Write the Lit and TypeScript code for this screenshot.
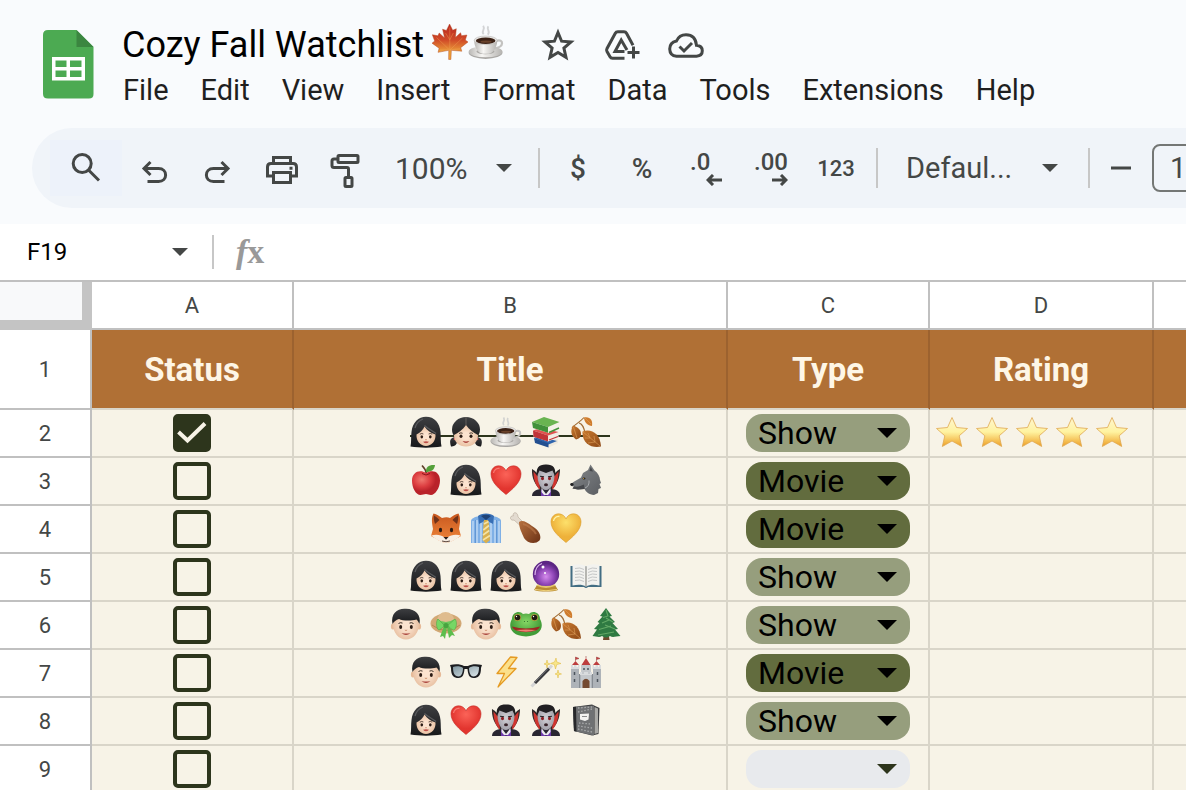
import { LitElement, html, svg, css } from "lit";
import { customElement, state } from "lit/decorators.js";
import { classMap } from "lit/directives/class-map.js";

interface Row {
  done: boolean;
  title: string[];
  type: string;
  rating: number;
}

const woman = svg`
  <path fill="url(#hair)" d="M.5 30.500C1.500 26 .8 21 1.500 16C2.500 6.500 8.500 .8 16 .8C24.500 .8 29.800 7 30.500 16C31 21 30.500 26 31.500 30.500C22 32 10 32 .5 30.500Z"/>
  <path fill="url(#skin)" d="M6.500 18.500C10 17 13 14 14.500 10.500C17 14.500 21 17 25.500 18.500C26 25 21.500 30 16 30C10.500 30 6 25 6.500 18.500Z"/>
  <path fill="none" stroke="#5a5b5e" stroke-width="1.200" d="M14.500 9.500C18 13 23 15 26 17.500M13 3C9 4.500 6 8 5 12"/>
  <path fill="none" stroke="#382a22" stroke-width=".8" d="M9.800 18.200q2-1.300 3.600-.2M18.600 18q2-1.200 3.600.2"/>
  <ellipse cx="11.800" cy="20.800" rx="1.300" ry="1.600" fill="#2b1b14"/><ellipse cx="20.300" cy="20.800" rx="1.300" ry="1.600" fill="#2b1b14"/>
  <path d="M15 23.500q1 .8 2 0" fill="none" stroke="#d39a78" stroke-width=".9"/>
  <path d="M13 25.800q3-1 6 0q-3 3-6 0Z" fill="#bd5049"/>`;

const boy = svg`
  <ellipse cx="2.900" cy="18.500" rx="2" ry="3" fill="#e6ba99"/><ellipse cx="29.100" cy="18.500" rx="2" ry="3" fill="#e6ba99"/>
  <path fill="url(#skin)" d="M3 15C3 7 8 3 16 3S29 7 29 15C29.500 25 23 31.500 16 31.500S2.500 25 3 15Z"/>
  <path fill="url(#hair)" d="M2.500 16C.5 6 7 .5 15 .8C25 .3 31.500 7 29.500 16C28.500 14 28 13 26.500 11.500C20 13.500 12 12.500 9 11C6 12 4 13.500 2.500 16Z"/>
  <path fill="none" stroke="#3a2d24" d="M8.500 15.500q2-1.400 4-.4M19.500 15.100q2-1 4 .4"/>
  <ellipse cx="10.700" cy="19" rx="1.500" ry="1.900" fill="#2b1b14"/><ellipse cx="21.300" cy="19" rx="1.500" ry="1.900" fill="#2b1b14"/>
  <path d="M14.800 22q1.200 1 2.400 0" fill="none" stroke="#cf9370"/>
  <path d="M11.500 25q4.500 1.200 9 0q-4.500 4.200-9 0Z" fill="#a8413a"/>`;

const heartPath = "M16 30.500C10 25.500 1 18.500 1 10C1 5 4.500 1.800 8.500 1.800C12 1.800 14.800 3.800 16 7C17.200 3.800 20 1.800 23.500 1.800C27.500 1.800 31 5 31 10C31 18.500 22 25.500 16 30.500Z";

const emoji: Record<string, ReturnType<typeof svg>> = {
  "maple leaf": svg`
    <path fill="url(#maple)" stroke="#b4461f" stroke-width=".4" d="M15.600 0L18.400 5.500L21.600 4.200L20.800 12L25.400 7.800L26.200 10.400L31 9.800L29.600 14.200L32 16L25.500 21L26.500 24.200L17.200 23.400L16.800 31.500L14.800 31.500L14.900 23.400L5.400 25.200L6.300 21.500L0 17L2.400 15.200L.3 9.500L5.300 10.500L6.400 8L11.200 12.400L9.400 4.600L12.800 5.800Z"/>
    <path stroke="#f3a257" stroke-width=".5" opacity=".7" fill="none" d="M15.800 3V24M16 23L27 12.500M15.500 23L4 12M16 23L25 22M15.500 23L7 23M15.800 14L19 8M15.800 14L12 8"/>`,
  "hot coffee": svg`
    <ellipse cx="15.600" cy="25.600" rx="15" ry="5.400" fill="#a9a7a4"/><ellipse cx="15.600" cy="24.600" rx="15" ry="5" fill="url(#china)"/>
    <ellipse cx="15.500" cy="24.500" rx="8" ry="2.400" fill="#aaa8a5"/>
    <path d="M25 15.200C32 12.500 32.500 21 23.500 21.600" fill="none" stroke="#c3c2c0" stroke-width="2"/>
    <path d="M5.500 14.500H26C26 21 22 26 18.500 26.500H13C9 26 5.500 21 5.500 14.500Z" fill="url(#china)"/>
    <ellipse cx="15.700" cy="14.500" rx="10.200" ry="3.800" fill="#e9e8e6" stroke="#b5b3b0" stroke-width=".5"/>
    <ellipse cx="15.700" cy="14.900" rx="8.700" ry="2.800" fill="#3c2216"/><ellipse cx="16" cy="15.700" rx="5" ry="1" fill="#6a422b"/>
    <path d="M14 9C11 6.500 16 5 13.500 1.500M17.500 9.500C20.500 7 16 5 18 2" fill="none" stroke="#c9cbcc" stroke-width="1.700" opacity=".8"/>`,
  woman,
  girl: svg`
    <path fill="url(#hair)" d="M5 21C-.5 22-.5 26 1 30.500C5 31 8 28 7 23ZM27 21C32.500 22 32.500 26 31 30.500C27 31 24 28 25 23Z"/>
    <circle cx="5" cy="23" r="1.300" fill="#d35a60"/><circle cx="27" cy="23" r="1.300" fill="#d35a60"/>
    <ellipse cx="16" cy="13.500" rx="14" ry="12.500" fill="url(#hair)"/>
    <path fill="url(#skin)" d="M4 19C8 17 13 13.500 16 9C19 13.500 24 17 28 19C28 26 23 30.500 16 30.500S4 26 4 19Z"/>
    <path d="M16 1V9" stroke="#77706b" stroke-width=".7"/>
    <path fill="none" stroke="#3a2d24" stroke-width=".9" d="M9 17.500q2-1.200 3.600-.2M19.400 17.300q2-1 3.600.2"/>
    <ellipse cx="11" cy="20.300" rx="1.500" ry="1.700" fill="#2b1b14"/><ellipse cx="21" cy="20.300" rx="1.500" ry="1.700" fill="#2b1b14"/>
    <path d="M12.500 25q3.500.8 7 0q-3.500 4-7 0Z" fill="#a8413a"/>`,
  books: svg`
    <path d="M5 22L10 19L28 23V27L19 31.500L5 26.500Z" fill="#eee9dd"/><path d="M4 22L8 20L27 25L18.500 28.500Z" fill="#2e64ad"/>
    <path d="M4 22L18.500 27.500V31.500L5 27Z" fill="#234f90"/>
    <path d="M3 15L10 12L28.500 16V21.500L18 25.500L3.500 20.500Z" fill="#f1ede4"/><path d="M3 14.500L10 12L28.500 16L18 19.500Z" fill="#df5351"/>
    <path d="M3 14.500L18 19.500V25.500L3.500 20.800Z" fill="#c13438"/><path d="M19 24L28 20.500" stroke="#c13438" stroke-width="1.300"/>
    <path d="M2.500 6.500L14 2L29 7V12.500L19 17L2.500 12Z" fill="#f4f1e8"/><path d="M2 6L14 1L29.500 6L18 11Z" fill="#69b451"/>
    <path d="M2 6L18 11V16.800L3 12Z" fill="#41913a"/><path d="M19 16.500L29 12" stroke="#41913a" stroke-width="1.400"/>`,
  "fallen leaves": svg`
    <path d="M2 12C5 8 9 7 14 1.500M9 7C13 8 14 12 15 17" fill="none" stroke="#9f6a31" stroke-width="1.100"/>
    <path d="M14 1.500C20 .3 23 4 22 10C18 9.500 14 6.500 14 1.500Z" fill="#cf7c2d"/>
    <path d="M3 9.500C7 11 11 13 11 18C11 21 9 23 6 23.500C1 20 0 15 3 9.500Z" fill="url(#leaf)"/>
    <path d="M12.500 15.500C21 12.500 30 17 31 30.500C22 32.500 12 28 12.500 15.500Z" fill="url(#leaf)"/>
    <path d="M13 16L30 30M18 17L20 22L15 22M24 20L25 26L18 27M3.500 11L7 22M15 2L21 8" fill="none" stroke="#dfa05a" stroke-width=".6"/>`,
  "red apple": svg`
    <path d="M16.500 10C16 6 14.500 4 12 1.500" stroke="#60402a" stroke-width="1.700" fill="none"/>
    <path d="M16 8C15.500 3 19 .5 25 1C24.500 6 21 8 16 8Z" fill="#55a03a"/>
    <path d="M16 9C23 5 30 8 30 16.500C30 24 25 31 21 31C18.500 31 18 30 16 30S12.500 31 10.500 31C6 31 2 24 2 16.500C2 8 10 5 16 9Z" fill="url(#apple)"/>
    <path d="M12 9.500q4 3 8 0" stroke="#8c151b" fill="none"/>`,
  "red heart": svg`<path d="${heartPath}" fill="url(#red)" stroke="#c52b27" stroke-width=".6"/><path d="M3.500 9C4 5.500 7 4 9.500 4.500" stroke="#ff9287" stroke-width="1.300" fill="none" opacity=".7"/>`,
  "yellow heart": svg`<path d="${heartPath}" fill="url(#gold)" stroke="#d99b27" stroke-width=".6"/><path d="M3.500 9C4 5.500 7 4 9.500 4.500" stroke="#fff4a9" stroke-width="1.300" fill="none"/>`,
  vampire: svg`
    <path d="M2 5C6 7 8 10 10 14H22C24 10 26 7 30 5C30 14 27 21 20 28H12C5 21 1.500 14 2 5Z" fill="#302829"/>
    <path d="M3.500 7.500L9 14L10 26C6 22 3.500 16 3.500 7.500ZM28.500 7.500L23 14L22 26C26 22 28.500 16 28.500 7.500Z" fill="#cf3530"/>
    <path d="M2 32C2 27 7 25.500 11 25H21C26 25.500 30 27 30 32Z" fill="#292631"/>
    <path d="M11 25L16 32L21 25V32H11Z" fill="#6e39aa"/><path d="M11.500 24L16 30L20.500 24V28L18 31H14L11.500 28Z" fill="#ece9ef"/>
    <path d="M7.500 9C7.500 4 11 2 16 2S24.500 4 24.500 9C25 19 21 26 16 26S7 19 7.500 9Z" fill="url(#grey)"/>
    <path d="M7 12C5.500 4 9 .3 16 .5C23 .3 26.500 4 25 12L22.500 6.500L16 9L9.500 6.500Z" fill="#211f22"/>
    <ellipse cx="12.500" cy="14.500" rx="1.500" ry="1.700" fill="#8e1f24"/><ellipse cx="19.500" cy="14.500" rx="1.500" ry="1.700" fill="#8e1f24"/>
    <path d="M10 12.300L14 12.800M18 12.800L22 12.300" stroke="#29262a" stroke-width="1.100"/><ellipse cx="16" cy="20.800" rx="2" ry="1.500" fill="#382228"/>`,
  wolf: svg`
    <path d="M1 20C4 17 8 15.500 11 13.500L13 9L18 6L20.500 .5L24.500 6.500C28 9 30 13 30 16L31 19L29.500 20L31 24L28.500 25L28 29L24 31C19 30.500 16 28 14.500 25L8 25.500L2.500 24.500L4 22.500L1 22Z" fill="url(#fur)"/>
    <path d="M19.500 7L20.700 3L23 7.500ZM4 22.500C8 23 11 22 14 20.500L14.500 25L8 25.500L2.500 24.500Z" fill="#46484c"/>
    <path d="M15 24C18 23 19.500 20 19 16.500" fill="none" stroke="#a7aaad"/>
    <ellipse cx="1.900" cy="20.500" rx="1.700" ry="1.400" fill="#202022"/><ellipse cx="14" cy="14.500" rx="1.500" ry="1" fill="#2a241c"/><circle cx="13.600" cy="14.400" r=".5" fill="#e4b64c"/>`,
  fox: svg`
    <path d="M3 17C2 11 1 6 3.500 1.500C7 2 9 4 12 6C15 5 18 5 20 6C23 4 25 2 28.500 1.500C31 6 30 11 29 17L31 24C25 27 20 31 16 31S7 27 1 24Z" fill="url(#fox)"/>
    <path d="M4 3.500C6 5 8 6 9.500 8L5 12C4 9 3.500 6 4 3.500ZM28 3.500C26 5 24 6 22.500 8L27 12C28 9 28.500 6 28 3.500Z" fill="#6e321a"/>
    <path d="M1 23.500C7 22 11 23 14.500 25.500H17.500C21 23 25 22 31 23.500C26 27 21 31 16 31S6 27 1 23.500Z" fill="#f7eee3"/>
    <ellipse cx="10.500" cy="18" rx="1.600" ry="2.300" fill="#291811"/><ellipse cx="21.500" cy="18" rx="1.600" ry="2.300" fill="#291811"/>
    <path d="M13.500 25H18.500L16 27.800Z" fill="#271b19"/><path d="M12 29q4 1.500 8 0" fill="none" stroke="#4b342a" stroke-width=".9"/>`,
  "shirt and necktie": svg`
    <path d="M1 9C1 6.500 5 5 9 4H23C27 5 31 6.500 31 9V31H1Z" fill="#7fb0e6"/>
    <path d="M3 9V31M7 8V31M11 11V31M21 11V31M25 8V31M29 9V31" stroke="#b9d5f3" stroke-width="1.600"/>
    <path d="M5.500 8V31M26.500 8V31" stroke="#5b91cf" stroke-width=".8"/>
    <path d="M8 4C11 .5 21 .5 24 4L23 12L16 8L9 12Z" fill="#386fb5"/><path d="M11 4Q16 1.500 21 4L16 8Z" fill="#1f4377"/>
    <path d="M14 8H18L19 12L20 28L16 31.500L12.500 28L13.500 12Z" fill="#d9b04e"/>
    <path d="M14 12L18.500 9.500M13.300 18L19 13.500M13 23L19.300 18.500M13 28L20 23.500" stroke="#f4e3a6" stroke-width="1.600"/>`,
  "poultry leg": svg`
    <path d="M4 8L14 17L17 14L8 5C8 2 6 0 4 1C3 2 3 3 3.500 3.800C1.500 3.500 0 5 .5 6.500C1 8 2.500 8.500 4 8Z" fill="#e3dbd0" stroke="#b6a798" stroke-width=".6"/>
    <path d="M9 10C12 7.500 17 10 22 14C29 18 32 24 29.500 28.500C25 33 17 31 14 26C12 21 9 16 9 10Z" fill="url(#meat)"/>
    <path d="M13 12C18 13 24 18 26 22" stroke="#c68151" stroke-width="2" opacity=".5" fill="none"/>`,
  "crystal ball": svg`
    <path d="M7 25H25L28 30C23 32 9 32 4 30Z" fill="#b98b32"/><path d="M5 29.500Q16 32 27 29.500" fill="none" stroke="#efd27c"/>
    <circle cx="16" cy="14" r="13.200" fill="url(#orb)"/><path d="M7 25Q16 29 25 25" stroke="#e5c76d" stroke-width="1.800" fill="none"/>
    <circle cx="13" cy="7" r="1.500" fill="#fff"/><circle cx="15" cy="13" r="1" fill="#fff"/><path d="M5 15C5 9 8 5 12 3.500" stroke="#ddb2ee" stroke-width="1.200" fill="none"/>`,
  "open book": svg`
    <path d="M.5 6H31.500V27H18Q16 29 14 27H.5Z" fill="#426d83"/>
    <path d="M2.500 5C8 3.500 13 4 16 6.500C19 4 24 3.500 29.500 5V25.500C24 24 19 24.500 16 26.500C13 24.500 8 24 2.500 25.500Z" fill="#f2f2ef"/>
    <path d="M16 6.500V26.500" stroke="#a6a6a2" stroke-width="1.600"/>
    <path d="M5 8.500q5-1.500 9 1M5 11.500q5-1.500 9 1M5 14.500q5-1.500 9 1M5 17.500q5-1.500 9 1M5 20.500q5-1.500 9 1M27 8.500q-5-1.500-9 1M27 11.500q-5-1.500-9 1M27 14.500q-5-1.500-9 1M27 17.500q-5-1.500-9 1M27 20.500q-5-1.500-9 1" fill="none" stroke="#b9bbbc" stroke-width=".8"/>`,
  boy,
  "sun hat": svg`
    <ellipse cx="16" cy="15.500" rx="15.500" ry="10" fill="#d2a875"/><path d="M2 17Q16 28 30 17" stroke="#b88854" fill="none"/>
    <path d="M7 13C8 1 23 1 24.500 13C19 17 12 17 7 13Z" fill="#dfbc8e"/>
    <path d="M7 11Q16 17 24.500 11L25 15Q16 20 7 15Z" fill="#6cc65c"/>
    <path d="M15 18L8 11C5 14 7 22 9 22ZM17 18L25 11C28 14 26 23 23 22Z" fill="#76d765" stroke="#4aa342" stroke-width=".5"/>
    <path d="M14 18L10 29L13 28L15 31L17 19ZM17 19L19 30L22 27L25 28L19 18Z" fill="#5dbd4e"/><circle cx="16" cy="17.500" r="2.600" fill="#48a440"/>`,
  frog: svg`
    <path d="M2 11C2 4 10 2 13 6Q16 5 19 6C22 2 30 4 30 11C34 18 32 28 16 28.500C0 28-2 18 2 11Z" fill="url(#frog)"/>
    <circle cx="7.500" cy="9.500" r="3.600" fill="#b5a03e"/><circle cx="24.500" cy="9.500" r="3.600" fill="#b5a03e"/>
    <circle cx="7.500" cy="9.500" r="2.800" fill="#1f1b12"/><circle cx="24.500" cy="9.500" r="2.800" fill="#1f1b12"/><circle cx="6.500" cy="8.500" r=".7" fill="#fff"/><circle cx="23.500" cy="8.500" r=".7" fill="#fff"/>
    <path d="M2 18.500Q16 22.500 30 18.500C28 26 4 26 2 18.500Z" fill="#9a2a22"/><path d="M6 22Q16 21 26 22Q16 25.500 6 22Z" fill="#ec8073"/><circle cx="14.500" cy="13.500" r=".6" fill="#2f6d2d"/><circle cx="17.500" cy="13.500" r=".6" fill="#2f6d2d"/>`,
  "evergreen tree": svg`
    <path d="M14 25H18.500L19.500 32H13Z" fill="#71492d"/>
    <path d="M16 0L22 8L19.500 8.500L25 14L22.500 15L28 21L25 21.500L30.500 28C26 28 23 30 20 28Q16 31 12 28C9 30 6 28 2.500 28L7 21.500L4 21L9.500 15L7.500 14L12.500 8.500L10 8Z" fill="#2f7a42"/>
    <path d="M16 2L18 8L13 9.500M19 12L12 15M21 18L9 21.500M24 24L8 27M16 10L23 14M15 17L25 21" fill="none" stroke="#63a966" stroke-width="1.100"/>`,
  glasses: svg`
    <path d="M0 9C5 7.500 11 8 14 10H18C21 8 27 7.500 32 9L31 12C31 20 28 22 23.500 22C19 22 18 18 17.500 13H14.500C14 18 13 22 8.500 22C4 22 1 20 1 12Z" fill="#1c1d20"/>
    <path d="M3 11C6 9.500 11 10 13 12C13 17 11 20.500 8.500 20.500C4.500 20.500 3 17 3 11ZM19 12C21 10 26 9.500 29 11C29 17 27.500 20.500 23.500 20.500C21 20.500 19 17 19 12Z" fill="url(#lens)"/>`,
  "high voltage": svg`<path d="M20.500 1L7 17.500H14.500L8 31L26 12.500H18.500L27 1.500Z" fill="#fbe08b" stroke="#e59b23" stroke-width="1.300" stroke-linejoin="round"/>`,
  "magic wand": svg`
    <path d="M1.500 30.500L22 9.500" stroke="#d5d5d5" stroke-width="3"/><path d="M5 27L19 12.600" stroke="#38383b" stroke-width="3"/><path d="M5 26L18 12.500" stroke="#7f8084" stroke-width=".9"/>
    <path d="M26 2L26.800 6L31 7.500L26.800 8.500L25.500 13L24.300 8.500L20.500 7.500L24.500 6ZM17 4L17.700 7L20 8L17.700 8.700L17 12L16.300 8.700L14 8L16.300 7ZM28 14L28.700 17L31.500 18L28.700 18.700L28 22L27.300 18.700L25 18L27.300 17Z" fill="#f7e58a" stroke="#dfb737" stroke-width=".5"/>`,
  castle: svg`
    <path d="M1 13H9V18H23V13H31V32H1Z" fill="#aeb3b8"/><path d="M11 9H21V32H11Z" fill="#c4c8cc"/><path d="M1 13V9H3V11H4V9H6.500V11H8V9H9.500V13ZM22.500 13V9H24V11H25.500V9H28V11H29V9H31V13ZM10 19V16H12V18H14V16H18V18H20V16H22V19Z" fill="#d9dcde"/>
    <path d="M11.500 9L16 2L20.500 9ZM2 9L5.500 5L9 9ZM23 9L26.500 5L30 9Z" fill="#bd3e3e"/><path d="M5.500 5V1L9 2.500L5.500 3.500M26.500 5V1L30 2.500L26.500 3.500M16 2V0" fill="#d33c3c" stroke="#974040" stroke-width=".6"/>
    <path d="M12.500 32V25Q16 20.500 19.500 25V32Z" fill="#744a30"/><path d="M4.500 16V19M27.500 16V19M4.500 23V26M27.500 23V26M14 12V14M18 12V14" stroke="#4c545b" stroke-width="1.500"/>
    <path d="M9.500 18V32M22.500 18V32" stroke="#868c92"/>`,
  notebook: svg`
    <path d="M3 3L22 .5L29.500 4L28.500 30L22 31.500L4 27Z" fill="#3a3b3d"/><path d="M24.500 3L28 4.500V29L24.500 30Z" fill="#a9a9a6"/>
    <path d="M3 3L24 1.500V31.500L4 27Z" fill="#6f7173"/>
    <path d="M8 4L22 3M8 8L22 5M8 22L22 24M8 25L22 28M9 19L21 20" stroke="#a8aaab" stroke-width="1.300" stroke-dasharray="1.500 1.700"/><path d="M3 3L6 2.700L6.500 27.500L4 27Z" fill="#27282a"/>
    <path d="M10 10L19 9.500L18.500 15.500L15 17L10 15.500Z" fill="#f3f3f1"/><path d="M12 12.500H17" stroke="#8a8b8c"/>`,
  star: svg`<path d="M16 1.500L20.500 11.500L31.500 12.500L23.200 19.800L25.700 30.500L16 25L6.300 30.500L8.800 19.800L.5 12.500L11.500 11.500Z" fill="url(#star)" stroke="#dfa852" stroke-width=".8" stroke-linejoin="round"/>`,
};

const drawEmoji = (name: string) =>
  html`<svg class="emoji" viewBox="0 0 32 32" role="img" aria-label=${name}>${emoji[name]}</svg>`;

const gradients = svg`<defs>
  <linearGradient id="hair" x1="0" y1="0" x2="0" y2="1"><stop offset="0" stop-color="#3d3e41"/><stop offset="1" stop-color="#17181a"/></linearGradient>
  <radialGradient id="skin"><stop offset=".3" stop-color="#fce3cf"/><stop offset="1" stop-color="#e9c2a4"/></radialGradient>
  <linearGradient id="maple" x1="0" y1="0" x2="0" y2="1"><stop offset="0" stop-color="#b9261f"/><stop offset=".45" stop-color="#d04a28"/><stop offset=".8" stop-color="#eda23a"/></linearGradient>
  <linearGradient id="china"><stop offset="0" stop-color="#b9b7b4"/><stop offset=".4" stop-color="#f7f6f4"/><stop offset="1" stop-color="#b5b3b0"/></linearGradient>
  <linearGradient id="leaf" x1="0" y1="0" x2="1" y2="1"><stop offset="0" stop-color="#c8792f"/><stop offset="1" stop-color="#8d4917"/></linearGradient>
  <radialGradient id="apple" cx=".35" cy=".35"><stop offset="0" stop-color="#f07a70"/><stop offset=".6" stop-color="#dc3d40"/><stop offset="1" stop-color="#b9222a"/></radialGradient>
  <radialGradient id="red" cy=".3"><stop offset="0" stop-color="#fb6358"/><stop offset="1" stop-color="#e2352f"/></radialGradient>
  <radialGradient id="gold" cy=".3"><stop offset="0" stop-color="#fde06b"/><stop offset="1" stop-color="#eeb13a"/></radialGradient>
  <radialGradient id="grey"><stop offset="0" stop-color="#d2d1d6"/><stop offset="1" stop-color="#a5a3ac"/></radialGradient>
  <linearGradient id="fur" x1="0" y1="0" x2="1" y2="1"><stop offset="0" stop-color="#85888b"/><stop offset="1" stop-color="#5b5e62"/></linearGradient>
  <linearGradient id="fox" x1="0" y1="0" x2="0" y2="1"><stop offset="0" stop-color="#c8581f"/><stop offset="1" stop-color="#f0863a"/></linearGradient>
  <linearGradient id="meat" x1="0" y1="0" x2="1" y2="1"><stop offset="0" stop-color="#b7713f"/><stop offset="1" stop-color="#6b3115"/></linearGradient>
  <radialGradient id="orb" cx=".5" cy=".6"><stop offset="0" stop-color="#d58bec"/><stop offset=".6" stop-color="#8f46b7"/><stop offset="1" stop-color="#5b2583"/></radialGradient>
  <radialGradient id="frog" cy=".4"><stop offset="0" stop-color="#86d765"/><stop offset="1" stop-color="#429c38"/></radialGradient>
  <linearGradient id="lens" x1="0" y1="0" x2="1" y2="1"><stop offset="0" stop-color="#7f959f"/><stop offset="1" stop-color="#dce6e9"/></linearGradient>
  <linearGradient id="star" x1="0" y1="0" x2="0" y2="1"><stop offset="0" stop-color="#fff6cf"/><stop offset=".5" stop-color="#fff3a0"/><stop offset="1" stop-color="#ee9f25"/></linearGradient>
</defs>`;

const icon = (body: unknown) =>
  html`<svg class="icon" viewBox="0 0 40 40" aria-hidden="true">${body}</svg>`;

const icons = {
  star: icon(svg`<path d="M20 7.500L23.600 16.200L33 17L25.900 23.100L28 32.300L20 27.400L12 32.300L14.100 23.100L7 17L16.400 16.200Z"/>`),
  drive: icon(svg`<path d="M22.500 33.300H10.500Q8.800 33.300 8 31.800L5 26.500Q4.200 25 5 23.500L13.300 8.200Q14.100 6.700 15.800 6.700H22Q23.700 6.700 24.500 8.200L31 20.200M22.500 26.500H13L19.200 15L25 25M31.500 21.500V33.500M25.500 27.500H37.500"/>`),
  cloud: icon(svg`<path d="M10.500 31.200H30.500Q36.300 31 36.300 25.800Q36.300 20.800 30.500 20.300Q29.500 9.700 20 9.700Q13.200 9.700 10.500 16Q3.700 17.500 3.700 24Q3.900 30.800 10.500 31.200ZM13.500 21.500L18 26L26 18"/>`),
  search: icon(svg`<circle cx="16.200" cy="15.500" r="9"/><path d="M22.500 22L33 32.500"/>`),
  undo: icon(svg`<path d="M16.500 14L10 20.500L16.500 27M10 20.500H24.500C34 20.500 34 33.500 24.500 33.500H13.500"/>`),
  redo: icon(svg`<path d="M23.500 14L30 20.500L23.500 27M30 20.500H15.500C6 20.500 6 33.500 15.500 33.500H26.500"/>`),
  print: icon(svg`<path d="M11.500 15V9.500H28.500V15M11.500 28H5.500V19Q5.500 15.500 9 15.500H31Q34.500 15.500 34.500 19V28H28.500M11.500 24.500H28.500V34.500H11.500Z"/><path d="M27.500 20.300H30.500" />`),
  paint: icon(svg`<rect x="12" y="7.500" width="20" height="7" rx="1"/><path d="M12 11H8Q6 11 6 13V17.500Q6 19.500 8 19.500H21Q22.500 19.500 22.500 21V29"/><rect x="19" y="29.500" width="7" height="9" rx="1"/>`),
};

const caret = html`<svg class="caret" viewBox="0 0 20 10" aria-hidden="true"><path d="M0 0H20L10 10Z" /></svg>`;

@customElement("app-root")
export class AppRoot extends LitElement {
  @state() private rows: Row[] = [
    { done: true, title: ["woman", "girl", "hot coffee", "books", "fallen leaves"], type: "Show", rating: 5 },
    { done: false, title: ["red apple", "woman", "red heart", "vampire", "wolf"], type: "Movie", rating: 0 },
    { done: false, title: ["fox", "shirt and necktie", "poultry leg", "yellow heart"], type: "Movie", rating: 0 },
    { done: false, title: ["woman", "woman", "woman", "crystal ball", "open book"], type: "Show", rating: 0 },
    { done: false, title: ["boy", "sun hat", "boy", "frog", "fallen leaves", "evergreen tree"], type: "Show", rating: 0 },
    { done: false, title: ["boy", "glasses", "high voltage", "magic wand", "castle"], type: "Movie", rating: 0 },
    { done: false, title: ["woman", "red heart", "vampire", "vampire", "notebook"], type: "Show", rating: 0 },
    { done: false, title: [], type: "", rating: 0 },
  ];

  static styles = css`
    :host {
      display: block;
      height: 100vh;
      overflow: hidden;
      background: #fff;
      color: #444746;
      font-family: Roboto, "Open Sans", sans-serif;
    }
    * { box-sizing: border-box; }
    button, input, select {
      font: inherit;
      color: inherit;
      background: none;
      border: 0;
      margin: 0;
      padding: 0;
      appearance: none;
    }
    svg { display: block; flex: none; }
    .top { background: #f9fbfd; padding: 20px 0 16px; overflow: hidden; }
    .brand { display: flex; gap: 28px; padding-left: 43px; }
    .logo { width: 51px; height: 69px; margin-top: 10px; }
    .title-row { display: flex; align-items: center; height: 50px; }
    h1 {
      display: flex;
      align-items: flex-start;
      margin: 0 22px 0 0;
      font-size: 36px;
      line-height: 42px;
      font-weight: 400;
      color: #000;
      white-space: nowrap;
    }
    h1 .emoji { width: 36px; height: 36px; }
    .title-text { padding-right: 8px; }
    .icon {
      width: 40px;
      height: 40px;
      fill: none;
      stroke: #444746;
      stroke-width: 3;
    }
    .tool {
      display: grid;
      place-items: center;
      flex: none;
      width: 64px;
      height: 56px;
      font-size: 28px;
      font-weight: 500;
    }
    .tool.search { width: 72px; background: #edf2fa; }
    .tool.format { width: 68px; font-size: 22px; }
    .tool.minus { width: 62px; }
    .menu { display: flex; gap: 32px; height: 40px; align-items: center; padding-left: 1px; }
    .menu button { font-size: 29px; line-height: 40px; color: #1f1f1f; }
    .toolbar {
      display: flex;
      align-items: center;
      height: 80px;
      margin: 18px 0 0 32px;
      padding-left: 18px;
      background: #f0f4f9;
      border-radius: 40px 0 0 40px;
      overflow: hidden;
    }
    .rule { flex: none; width: 2px; height: 40px; background: #c7c7c7; }
    .rule.after { margin-right: 6px; }
    .rule.before { margin-left: 6px; }
    .pick { display: grid; align-items: center; flex: none; }
    .pick > * { grid-area: 1 / 1; }
    .pick .caret { justify-self: end; pointer-events: none; }
    .caret { width: 16px; height: 8px; fill: #444746; }
    .zoom { width: 160px; padding-right: 26px; }
    .zoom select { padding-left: 17px; font-size: 30px; }
    .font { width: 210px; padding-right: 30px; }
    .font select { padding-left: 28px; font-size: 29px; }
    .decimals {
      display: grid;
      flex: none;
      width: 64px;
      padding: 0 16px;
      text-align: left;
      font-size: 24px;
      line-height: 24px;
      font-weight: 500;
    }
    .decimals svg {
      justify-self: end;
      width: 16px;
      height: 12px;
      fill: none;
      stroke: #444746;
      stroke-width: 3;
    }
    .size {
      flex: none;
      width: 80px;
      height: 48px;
      padding-left: 16px;
      border: 2px solid #747775;
      border-radius: 8px;
      font-size: 29px;
    }
    .formula {
      display: flex;
      align-items: center;
      height: 58px;
      border-bottom: 2px solid #c0c0c0;
    }
    .cell-name { width: 212px; padding-right: 24px; }
    .cell-name input { width: 140px; padding-left: 27px; font-size: 24px; color: #000; }
    .formula .rule { height: 34px; }
    .fx {
      padding-left: 22px;
      font-family: "Liberation Serif", serif;
      font-size: 34px;
      line-height: 40px;
      color: #999;
      font-weight: 700;
    }
    .entry { flex: 1; min-width: 0; margin-left: 12px; height: 40px; }
    table { width: 100%; border-collapse: separate; border-spacing: 0; table-layout: fixed; }
    .w-head { width: 92px; }
    .w-a, .w-c { width: 202px; }
    .w-b { width: 434px; }
    .w-d { width: 224px; }
    th, td {
      height: 48px;
      padding: 0;
      border: solid #c0c0c0;
      border-width: 0 2px 2px 0;
      font-weight: 400;
      vertical-align: middle;
    }
    th { font-size: 22px; }
    .corner { background: #f8f9fa; border-width: 0 10px 10px 0; border-color: #c4c4c4; }
    td { background: #f7f3e7; border-color: #d9d5c9; }
    .heading td {
      height: 80px;
      background: #b07035;
      border-right-color: #9c622f;
      color: #fef6e6;
      font-size: 33px;
      font-weight: 700;
      text-align: center;
    }
    tr > :last-child { border-right-width: 0; }
    .tick { display: grid; width: 38px; margin: 0 auto; }
    .tick > * { grid-area: 1 / 1; }
    .tick input { width: 38px; height: 38px; border: 4px solid #2d351c; border-radius: 5px; }
    .tick input:checked { background: #2d351c; }
    .tick svg { width: 38px; height: 38px; fill: none; stroke: #f7f3e7; stroke-width: 4; pointer-events: none; }
    .emojis { display: flex; gap: 8px; width: max-content; padding: 0 8px 2px 0; margin: 0 auto; }
    .emojis.struck { background: linear-gradient(#2d351c, #2d351c) 0 19px / 100% 2px no-repeat; }
    .emojis.left { margin: 0 0 0 6px; }
    .emoji { width: 32px; height: 32px; }
    .chip {
      margin: 0 18px;
      padding-right: 13px;
      height: 38px;
      border-radius: 16px;
      background: #e8eaed;
      color: #000;
    }
    .chip.show { background: #969e7d; }
    .chip.movie { background: #626c3e; }
    .chip select { width: 100%; padding-left: 12px; font-size: 32px; line-height: 38px; }
    .chip .caret { width: 20px; height: 10px; fill: #2d351c; }
    .chip.show .caret, .chip.movie .caret { fill: #000; }
  `;

  private toggle(index: number) {
    this.rows = this.rows.map((r, i) => (i === index ? { ...r, done: !r.done } : r));
  }

  private setType(index: number, e: Event) {
    const type = (e.target as HTMLSelectElement).value;
    this.rows = this.rows.map((r, i) => (i === index ? { ...r, type } : r));
  }

  private renderRow(row: Row, i: number) {
    const n = i + 2;
    return html`<tr>
      <th scope="row">${n}</th>
      <td>
        <label class="tick">
          <input type="checkbox" aria-label="Status, row ${n}" .checked=${row.done} @change=${() => this.toggle(i)} />
          ${row.done ? html`<svg viewBox="0 0 38 38" aria-hidden="true"><path d="M5.500 18L14.500 26.500L32 9.500" /></svg>` : ""}
        </label>
      </td>
      <td><div class=${classMap({ emojis: true, struck: row.done })}>${row.title.map(drawEmoji)}</div></td>
      <td>
        <div class=${classMap({ pick: true, chip: true, show: row.type === "Show", movie: row.type === "Movie" })}>
          <select aria-label="Type, row ${n}" @change=${(e: Event) => this.setType(i, e)}>
            <option value="" ?selected=${row.type === ""}></option>
            <option ?selected=${row.type === "Show"}>Show</option>
            <option ?selected=${row.type === "Movie"}>Movie</option>
          </select>
          ${caret}
        </div>
      </td>
      <td><div class="emojis left">${Array.from({ length: row.rating }, () => drawEmoji("star"))}</div></td>
      <td></td>
    </tr>`;
  }

  render() {
    return html`
      <header class="top">
        <div class="brand">
          <svg class="logo" viewBox="0 0 51 69" role="img" aria-label="Sheets">
            ${gradients}
            <path fill="#4caa52" d="M5 0H33.500L50.500 17V64Q50.500 68.500 46 68.500H5Q0 68.500 0 64V5Q0 0 5 0Z" />
            <path fill="#3b8640" d="M33.500 0L50.500 17H33.500Z" />
            <path fill="#fff" fill-rule="evenodd" d="M9 27H42V50.500H9ZM12.500 30.500V37H23.500V30.500ZM27 30.500V37H38.500V30.500ZM12.500 40.500V47H23.500V40.500ZM27 40.500V47H38.500V40.500Z" />
          </svg>
          <div>
            <div class="title-row">
              <h1><span class="title-text">Cozy Fall Watchlist</span>${drawEmoji("maple leaf")}${drawEmoji("hot coffee")}</h1>
              <button class="tool" aria-label="Star">${icons.star}</button>
              <button class="tool" aria-label="Add to Drive">${icons.drive}</button>
              <button class="tool" aria-label="Saved to Drive">${icons.cloud}</button>
            </div>
            <nav class="menu">
              ${["File", "Edit", "View", "Insert", "Format", "Data", "Tools", "Extensions", "Help"].map(
                (m) => html`<button>${m}</button>`
              )}
            </nav>
          </div>
        </div>
        <div class="toolbar" role="toolbar" aria-label="Main">
          <button class="tool search" aria-label="Search the menus">${icons.search}</button>
          <button class="tool" aria-label="Undo">${icons.undo}</button>
          <button class="tool" aria-label="Redo">${icons.redo}</button>
          <button class="tool" aria-label="Print">${icons.print}</button>
          <button class="tool" aria-label="Paint format">${icons.paint}</button>
          <div class="pick zoom">
            <select aria-label="Zoom"><option>100%</option></select>
            ${caret}
          </div>
          <span class="rule after"></span>
          <button class="tool" aria-label="Currency">$</button>
          <button class="tool" aria-label="Percent">%</button>
          <button class="decimals" aria-label="Decrease decimal places">
            .0<svg viewBox="0 0 16 12"><path d="M16 6H2M7 1L2 6L7 11" /></svg>
          </button>
          <button class="decimals" aria-label="Increase decimal places">
            .00<svg viewBox="0 0 16 12"><path d="M0 6H14M9 1L14 6L9 11" /></svg>
          </button>
          <button class="tool format" aria-label="More formats">123</button>
          <span class="rule before"></span>
          <div class="pick font">
            <select aria-label="Font"><option>Defaul...</option></select>
            ${caret}
          </div>
          <span class="rule"></span>
          <button class="tool minus" aria-label="Decrease font size">${icon(svg`<path d="M10 20H30" />`)}</button>
          <input class="size" aria-label="Font size" value="10" />
        </div>
      </header>
      <div class="formula">
        <div class="pick cell-name">
          <input aria-label="Name box" value="F19" />
          ${caret}
        </div>
        <span class="rule"></span>
        <label class="fx" for="entry"><em>f</em>x</label>
        <input class="entry" id="entry" />
      </div>
      <table>
        <colgroup>
          <col class="w-head" /><col class="w-a" /><col class="w-b" /><col class="w-c" /><col class="w-d" /><col />
        </colgroup>
        <thead>
          <tr>
            <th class="corner"></th>
            <th scope="col">A</th>
            <th scope="col">B</th>
            <th scope="col">C</th>
            <th scope="col">D</th>
            <th scope="col"></th>
          </tr>
        </thead>
        <tbody>
          <tr class="heading">
            <th scope="row">1</th>
            <td>Status</td>
            <td>Title</td>
            <td>Type</td>
            <td>Rating</td>
            <td></td>
          </tr>
          ${this.rows.map((r, i) => this.renderRow(r, i))}
        </tbody>
      </table>
    `;
  }
}
